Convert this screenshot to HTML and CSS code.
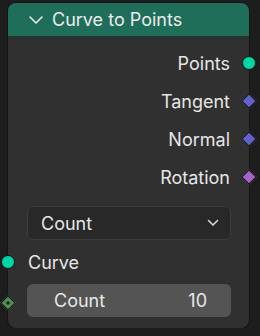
FILE: index.html
```html
<!doctype html>
<html>
<head>
<meta charset="utf-8">
<title>Curve to Points</title>
  <link rel="stylesheet" href="styles.css">
</head>
<body>
  <div class="node">
    <div class="node-header">
      <svg class="collapse" width="16" height="10" viewBox="0 0 16 10">
        <path d="M2 2 L8 8 L14 2" fill="none" stroke="#e8e8e8" stroke-width="1.6" stroke-linecap="round" stroke-linejoin="round"/>
      </svg>
      <span class="node-title">Curve to Points</span>
    </div>
    <div class="node-body">
      <div class="row out">Points<span class="sock circle geo"></span></div>
      <div class="row out">Tangent<span class="sock diamond vec"></span></div>
      <div class="row out">Normal<span class="sock diamond vec"></span></div>
      <div class="row out">Rotation<span class="sock diamond rot"></span></div>

      <div class="select">
        <span>Count</span>
        <svg width="12" height="8" viewBox="0 0 12 8">
          <path d="M1.5 1.5 L6 6 L10.5 1.5" fill="none" stroke="#d8d8d8" stroke-width="1.6" stroke-linecap="round" stroke-linejoin="round"/>
        </svg>
      </div>

      <div class="row in">Curve<span class="sock circle geo"></span></div>

      <div class="field-row">
        <span class="sock diamond int"></span>
        <div class="field">
          <span>Count</span>
          <span>10</span>
        </div>
      </div>
    </div>
  </div>
</body>
</html>
```

FILE: styles.css
```css
body {
  margin: 0;
  background: #1d1d1d;
  font-family: Inter, 'Open Sans', sans-serif;
  color: #e6e6e6;
}

.node {
  position: relative;
  margin: 3px 0 0 8px;
  width: 241px;
  height: 325px;
  background: #303030;
  border-radius: 8px;
  box-shadow: 0 0 0 1px #151515;
}

.node-header {
  display: flex;
  align-items: center;
  height: 33px;
  padding-left: 20px;
  background: #1f6e5a;
  border-radius: 8px 8px 0 0;
  border-bottom: 1px solid #1a3a32;
}
.collapse {
  margin-right: 8px;
}
.node-title {
  font-size: 18px;
  color: #ececec;
}

.node-body {
  padding-top: 7px;
}

.row {
  position: relative;
  display: flex;
  align-items: center;
  height: 38px;
  font-size: 18px;
}
.row.out {
  justify-content: flex-end;
  padding-right: 19px;
}
.row.in {
  height: 44px;
  padding-left: 20px;
}

/* sockets sit on the node's edge */
.sock {
  position: absolute;
  top: 50%;
  display: block;
  box-sizing: border-box;
}
.out .sock {
  right: 0;
  transform: translate(50%, -50%);
}
.in .sock {
  left: 0;
  transform: translate(-50%, -50%);
}
.sock.circle {
  width: 14px;
  height: 14px;
  border-radius: 50%;
  border: 1px solid #141414;
}
.sock.diamond {
  width: 11px;
  height: 11px;
  border: 1px solid #141414;
}
.out .sock.diamond {
  transform: translate(50%, -50%) rotate(45deg);
}
.geo { background: #00d6a3; }
.vec { background: #6363c7; }
.rot { background: #a363c7; }
.int { background: #4f8f56; }

.select {
  display: flex;
  align-items: center;
  justify-content: space-between;
  height: 32px;
  margin: 10px 18px 0 19px;
  padding: 0 11px 0 13px;
  background: #282828;
  border: 1px solid #3c3c3c;
  border-radius: 6px;
  font-size: 18px;
}

.field-row {
  position: relative;
  padding: 0 18px 0 19px;
}
.field-row .sock {
  left: 0;
  top: 19px;
  transform: translate(-50%, -50%) rotate(45deg);
}
.field-row .sock::after {
  content: '';
  position: absolute;
  left: 3px;
  top: 3px;
  width: 3px;
  height: 3px;
  background: #1e1e1e;
}
.field {
  display: flex;
  align-items: center;
  justify-content: space-between;
  height: 33px;
  padding: 0 24px 0 27px;
  background: #545454;
  border-radius: 6px;
  font-size: 18px;
  color: #e8e8e8;
}
```
